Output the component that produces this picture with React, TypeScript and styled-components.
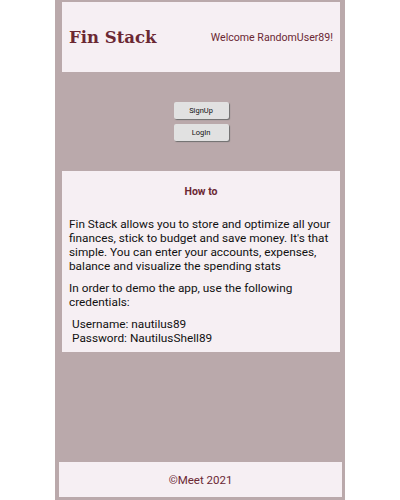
import React from 'react';
import styled, { createGlobalStyle } from 'styled-components';

const GlobalStyle = createGlobalStyle`
  body {
    margin: 0;
    background: #ffffff;
    font-family: Roboto, "Noto Sans", sans-serif;
  }
`;

const Page = styled.div`
  width: 290px;
  min-height: 500px;
  margin: 0 auto;
  background-color: #baa9ab;
  display: flex;
  flex-direction: column;
  padding: 2px 5px 3px 7px;
  box-sizing: border-box;
`;

const Panel = styled.div`
  background-color: #f6eff3;
`;

const Header = styled(Panel)`
  height: 70px;
  display: flex;
  align-items: center;
  justify-content: space-between;
  padding: 0 7px;
`;

const Logo = styled.h1`
  margin: 0;
  font-family: "DejaVu Serif", "Liberation Serif", serif;
  font-size: 16.5px;
  font-weight: bold;
  color: #6b2833;
`;

const Welcome = styled.span`
  font-size: 10.6px;
  color: #6b2833;
`;

const Buttons = styled.div`
  display: flex;
  flex-direction: column;
  align-items: center;
  gap: 5px;
  margin: 30px 0 30px;
`;

const Button = styled.button`
  width: 55px;
  height: 17px;
  padding: 0;
  border: none;
  border-radius: 2px;
  background-color: #e1e1e1;
  box-shadow: 1px 1px 1px #6e6e6e;
  font-family: Roboto, sans-serif;
  font-size: 7.5px;
  color: #111;
`;

const HowTo = styled(Panel)`
  padding: 14px 7px 7px;
`;

const Title = styled.h2`
  margin: 0 0 19px;
  text-align: center;
  font-size: 10.5px;
  font-weight: bold;
  color: #6b2833;
`;

const Text = styled.p`
  margin: 0 0 8px;
  font-size: 11.8px;
  line-height: 14px;
  color: #111;
`;

const Creds = styled(Text)`
  margin-bottom: 0;
  padding-left: 3px;
`;

const Footer = styled(Panel)`
  margin: auto -2px 0 -3px;
  height: 35px;
  display: flex;
  align-items: center;
  justify-content: center;
  font-size: 11.5px;
  color: #6b2833;
`;

const App: React.FC = () => {
  return (
    <>
      <GlobalStyle />
      <Page>
        <Header>
          <Logo>Fin Stack</Logo>
          <Welcome>Welcome RandomUser89!</Welcome>
        </Header>

        <Buttons>
          <Button>SignUp</Button>
          <Button>LogIn</Button>
        </Buttons>

        <HowTo>
          <Title>How to</Title>
          <Text>
            Fin Stack allows you to store and optimize all your finances, stick to budget and save
            money. It's that simple. You can enter your accounts, expenses, balance and visualize the
            spending stats
          </Text>
          <Text>In order to demo the app, use the following credentials:</Text>
          <Creds>
            Username: nautilus89
            <br />
            Password: NautilusShell89
          </Creds>
        </HowTo>

        <Footer>©Meet 2021</Footer>
      </Page>
    </>
  );
};

export default App;
